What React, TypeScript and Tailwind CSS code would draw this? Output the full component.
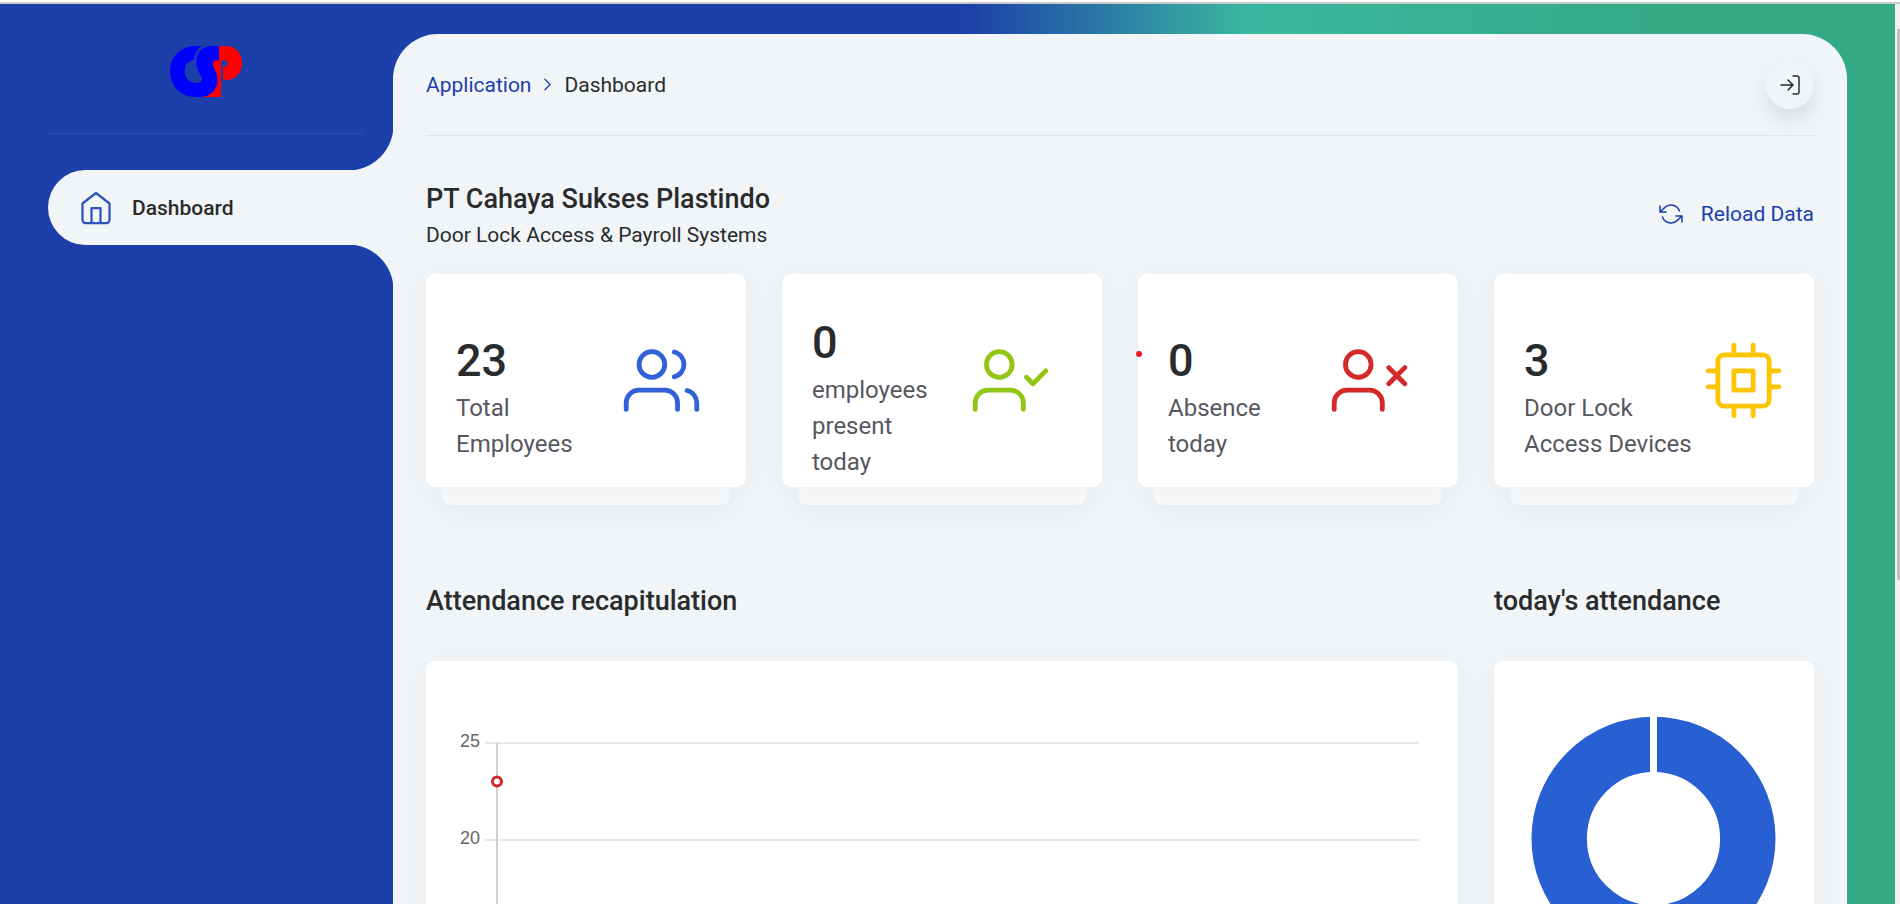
import type { ReactNode } from "react";

type IconProps = { className: string; children: ReactNode };

function Icon({ className, children }: IconProps) {
  return (
    <svg
      viewBox="0 0 24 24"
      fill="none"
      stroke="currentColor"
      strokeWidth="1.5"
      strokeLinecap="round"
      strokeLinejoin="round"
      className={className}
      aria-hidden="true"
    >
      {children}
    </svg>
  );
}

function Logo() {
  return (
    <svg viewBox="0 0 216 153" className="h-[51px] w-[72px]" role="img" aria-label="CSP">
      <path
        fill="#ff0000"
        d="M147 0H168C196 0 216 21 216 50C216 80 197 101 172 101H159V61C168 63 173 58 173 52C173 46 168 42 162 42C156 42 153 46 153 52V153H98C130 145 142 120 141 98C140 80 128 68 128 54C128 47 133 43 139 43H147Z"
      />
      <path
        fill="#0000ff"
        d="M96 0C80 9 73 24 72 42C55 44 44 58 44 76C44 97 58 111 78 111C90 111 96 107 96 100C94 88 79 73 79 48C79 20 98 0 124 0H147V43H139C132 43 127 48 128 55C130 68 143 80 143 103C143 132 120 153 90 153H76C32 153 0 119 0 76C0 32 33 0 76 0Z"
      />
    </svg>
  );
}

const person = (
  <>
    <circle cx="9" cy="7" r="4" />
    <path d="M17 21v-2a4 4 0 0 0-4-4H5a4 4 0 0 0-4 4v2" />
  </>
);

const narrowPerson = (
  <>
    <circle cx="8.5" cy="7" r="4" />
    <path d="M16 21v-2a4 4 0 0 0-4-4H5a4 4 0 0 0-4 4v2" />
  </>
);

const stats = [
  {
    value: "23",
    label: "Total Employees",
    text: "w-[130px]",
    icon: "mr-4 text-[#3160d8]",
    marker: false,
    drawing: (
      <>
        {person}
        <path d="M23 21v-2a4 4 0 0 0-3-3.87M16 3.13a4 4 0 0 1 0 7.75" />
      </>
    ),
  },
  {
    value: "0",
    label: "employees present today",
    text: "w-[130px]",
    icon: "mr-[23px] text-[#91c714]",
    marker: false,
    drawing: (
      <>
        {narrowPerson}
        <path d="M17 11l2 2 4-4" />
      </>
    ),
  },
  {
    value: "0",
    label: "Absence today",
    text: "w-[130px]",
    icon: "mr-5 text-[#d32929]",
    marker: true,
    drawing: (
      <>
        {narrowPerson}
        <path d="M18 8l5 5M23 8l-5 5" />
      </>
    ),
  },
  {
    value: "3",
    label: "Door Lock Access Devices",
    text: "w-[170px]",
    icon: "mr-0.5 text-[#fbc500]",
    marker: false,
    drawing: (
      <>
        <rect x="4" y="4" width="16" height="16" rx="2" />
        <path d="M9 9h6v6H9zM9 1v3M15 1v3M9 20v3M15 20v3M20 9h3M20 14h3M1 9h3M1 14h3" />
      </>
    ),
  },
];

const ticks = [25, 20, 15, 10, 5, 0];

function AttendanceChart() {
  return (
    <svg className="block h-[600px] w-full" role="img" aria-label="Attendance recapitulation">
      {ticks.map((tick, i) => {
        const y = 82 + i * 97;
        return (
          <g key={tick}>
            <text
              x="24"
              y={y + 4}
              textAnchor="end"
              className="fill-[#666] font-[family-name:'Liberation_Sans',sans-serif] text-[18px]"
            >
              {tick}
            </text>
            <line x1="29" x2="100%" y1={y} y2={y} stroke="#e7e7e7" strokeWidth="2" />
          </g>
        );
      })}
      <line x1="41" x2="41" y1="82" y2="567" stroke="#cfcfcf" strokeWidth="2" />
      <circle cx="41" cy="120.5" r="4.5" fill="white" stroke="#d32929" strokeWidth="3" />
    </svg>
  );
}

function AttendanceDonut() {
  return (
    <svg viewBox="0 0 250 250" className="mx-auto block size-[250px]" role="img" aria-label="today's attendance">
      <circle cx="124.5" cy="124.7" r="94.3" fill="none" stroke="#285fd3" strokeWidth="55.4" />
      <path d="M124.5 0V60" stroke="white" strokeWidth="7" />
    </svg>
  );
}

export default function App() {
  return (
    <div className="flex h-screen flex-col overflow-hidden bg-white pt-0.5 font-[Roboto,sans-serif] text-[21px] leading-8 text-[#2a2b2d]">
      <div className="flex min-h-0 flex-1 border-t-2 border-[#cbcbcb]">
        <div className="flex min-w-0 flex-1 bg-[linear-gradient(to_right,#1c3faa_50.8%,#3ab7a0_65.8%,#34aa84_88.7%)] pt-[30px] pr-12 pl-12">
          <aside className="w-[345px] shrink-0">
            <div className="mr-[30px] flex h-[100px] justify-center border-b border-[#2d50b7] pt-3">
              <Logo />
            </div>
            <nav className="relative mt-9">
              <span className="absolute right-0 bottom-full size-[38px] bg-[radial-gradient(circle_at_-7px_-7px,transparent_45px,#f1f5f8_46px)]" />
              <a href="#dashboard" className="flex h-[75px] items-center gap-[18px] rounded-l-full bg-[#f1f5f8] pl-[30px] font-medium">
                <Icon className="size-9 text-[#2d53bd]">
                  <path d="M3 9l9-7 9 7v11a2 2 0 0 1-2 2H5a2 2 0 0 1-2-2zM9 22V12h6v10" />
                </Icon>
                Dashboard
              </a>
              <span className="absolute top-full right-0 size-[38px] bg-[radial-gradient(circle_at_-7px_45px,transparent_45px,#f1f5f8_46px)]" />
            </nav>
          </aside>

          <main className="min-w-0 flex-1 overflow-hidden rounded-t-[45px] bg-[#f1f5f8] px-[33px]">
            <header className="flex h-[102px] items-center justify-between border-b border-[#dfe4e8]">
              <nav aria-label="Breadcrumb" className="flex items-center gap-1.5">
                <a href="#application" className="text-[#1c3faa]">
                  Application
                </a>
                <Icon className="size-[21px] text-[#1c3faa]">
                  <path d="M9 18l6-6-6-6" />
                </Icon>
                <span>Dashboard</span>
              </nav>
              <button
                type="button"
                aria-label="Log out"
                className="flex size-12 items-center justify-center rounded-full bg-[#f1f5f8] shadow-[0_10px_20px_rgba(0,0,0,0.1)]"
              >
                <Icon className="size-6">
                  <path d="M15 3h4a2 2 0 0 1 2 2v14a2 2 0 0 1-2 2h-4M10 17l5-5-5-5M15 12H3" />
                </Icon>
              </button>
            </header>

            <div className="mt-[43px] flex items-center justify-between">
              <div>
                <h1 className="text-[27px] leading-10 font-medium">PT Cahaya Sukses Plastindo</h1>
                <p>Door Lock Access &amp; Payroll Systems</p>
              </div>
              <button type="button" className="flex items-center gap-[18px] pb-0.5 text-[#1c3faa]">
                <Icon className="size-6">
                  <path d="M1 4v6h6M23 20v-6h-6M20.49 9A9 9 0 0 0 5.64 5.64L1 10M23 14l-4.64 4.36A9 9 0 0 1 3.51 15" />
                </Icon>
                Reload Data
              </button>
            </div>

            <section className="mt-[23px] grid grid-cols-4 gap-9">
              {stats.map((stat) => (
                <div key={stat.label} className="flex flex-col">
                  <article className="relative z-10 flex flex-1 items-center justify-between rounded-[9px] bg-white px-[30px] pt-11 pb-[7px] shadow-[0_5px_30px_rgba(0,0,0,0.043)]">
                    {stat.marker && <span className="absolute top-[77px] -left-0.5 size-1.5 rounded-full bg-[#ec1c24]" />}
                    <div className={stat.text}>
                      <div className="text-[45px] leading-[50px] font-medium">{stat.value}</div>
                      <div className="mt-1 text-[24px] leading-9 text-[#57575f]">{stat.label}</div>
                    </div>
                    <div className={`shrink-0 pb-[38px] ${stat.icon}`}>
                      <Icon className="size-[77px]">{stat.drawing}</Icon>
                    </div>
                  </article>
                  <div className="mx-4 h-[18px] rounded-b-[9px] bg-[#f9fafb] shadow-[0_5px_30px_rgba(0,0,0,0.06)]" />
                </div>
              ))}
            </section>

            <div className="mt-[76px] grid grid-cols-4 gap-9">
              <section className="col-span-3">
                <h2 className="text-[27px] leading-10 font-medium">Attendance recapitulation</h2>
                <div className="mt-10 rounded-[9px] bg-white pr-[39px] pl-[30px] shadow-[0_5px_30px_rgba(0,0,0,0.043)]">
                  <AttendanceChart />
                </div>
              </section>
              <section>
                <h2 className="text-[27px] leading-10 font-medium">today's attendance</h2>
                <div className="mt-10 h-[600px] rounded-[9px] bg-white pt-[53px] shadow-[0_5px_30px_rgba(0,0,0,0.043)]">
                  <AttendanceDonut />
                </div>
              </section>
            </div>
          </main>
        </div>
        <div className="w-[5px] shrink-0 bg-[#f1f1f1] pt-[25px] pl-0.5">
          <div className="h-[63%] bg-[#c1c1c1]" />
        </div>
      </div>
    </div>
  );
}
